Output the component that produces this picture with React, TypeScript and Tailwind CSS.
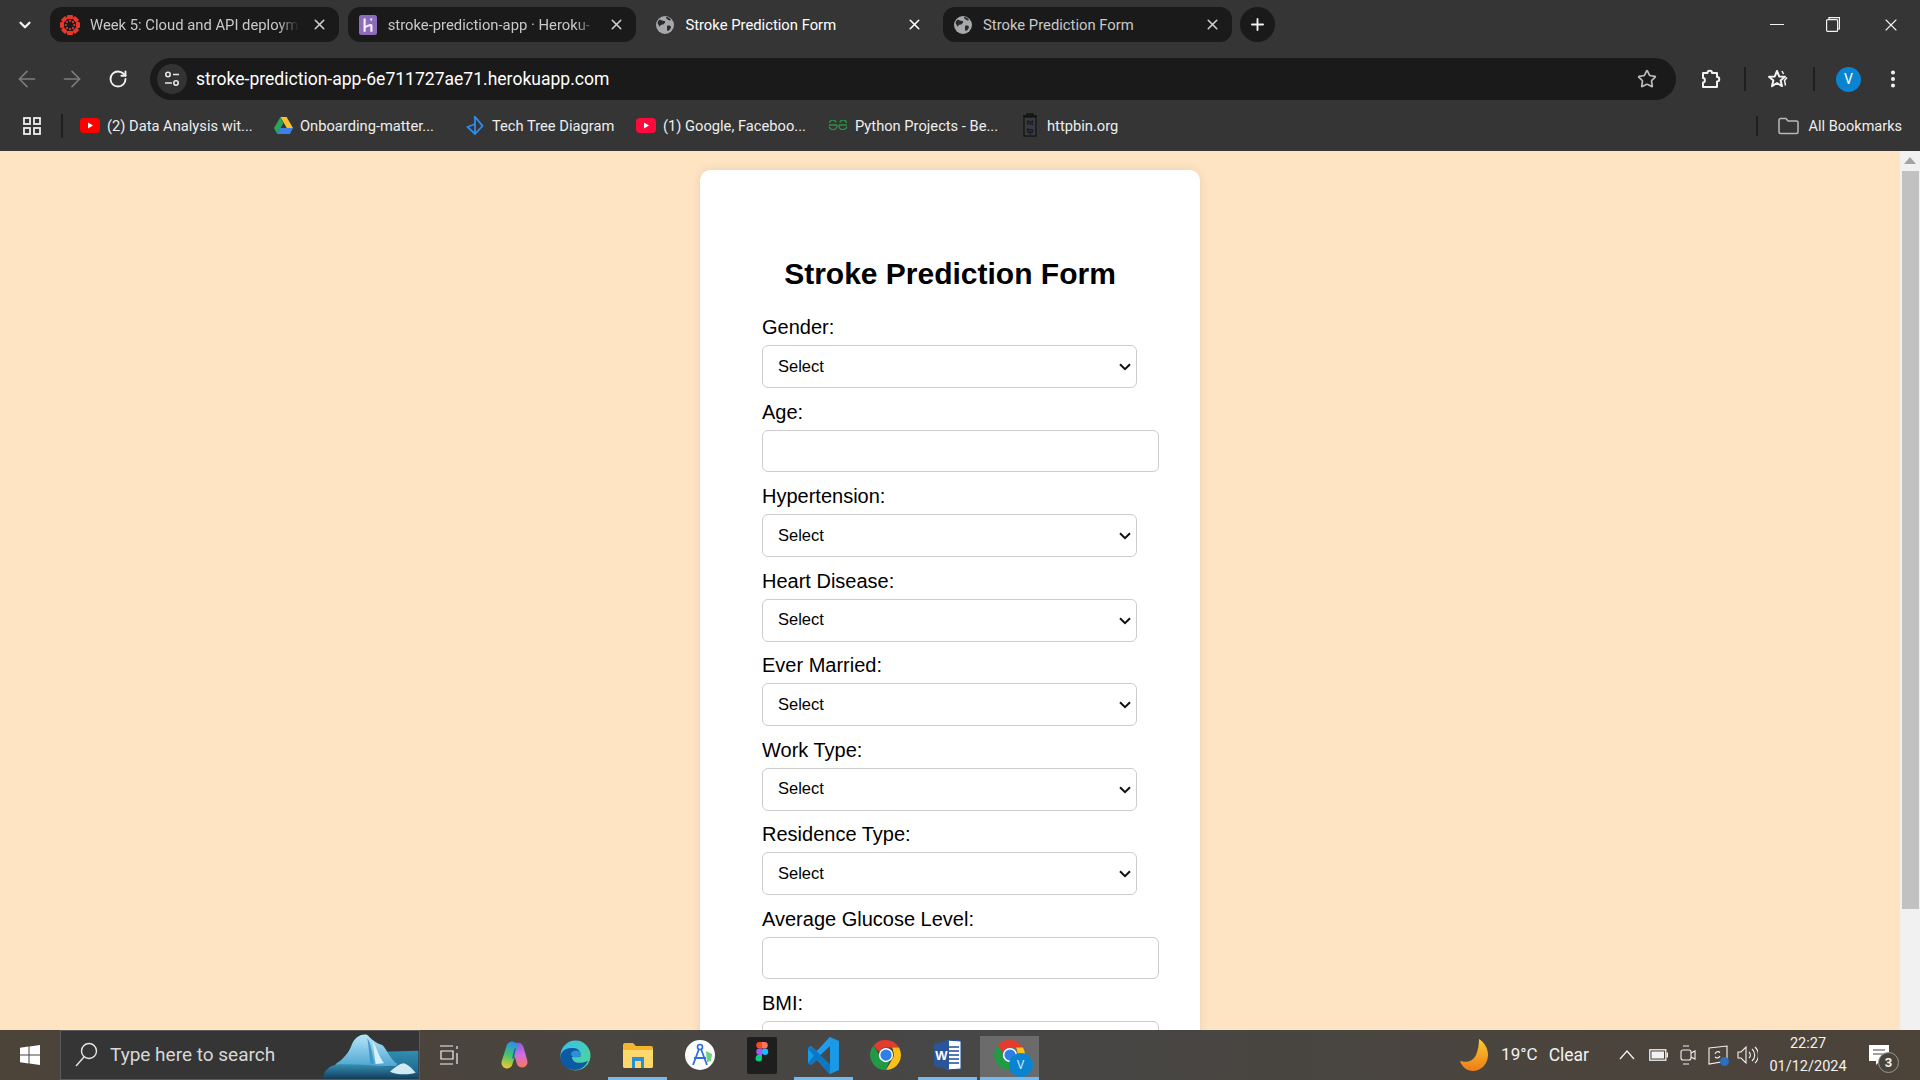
import React from "react";
import { ArrowLeft, ArrowRight, ChevronDown, MoreVertical, Plus, RotateCw, Star, X } from "lucide-react";

const ui = "font-['Roboto','Noto_Sans',sans-serif]";

function Globe() {
  return (
    <svg width="20" height="20" viewBox="0 0 20 20" className="shrink-0">
      <circle cx="10" cy="10" r="9" fill="#a6a8ab" />
      <path d="M4 5c2-1 3 1 5 1s1 2 0 3-3 0-4 2-1-1-2-2 0-3 1-4zM12 11c2-1 4 0 4 1s-2 4-3 4-1-2-1-3 0-2 0-2zM11 2c2 0 4 1 5 3-1 1-3 0-4-1s-1-1-1-2z" fill="#2b2b2b" />
    </svg>
  );
}

function Canvas() {
  const dots = Array.from({ length: 8 }, (_, i) => i * 45);
  return (
    <svg width="22" height="22" viewBox="0 0 22 22" className="shrink-0">
      {dots.map((a) => (
        <g key={a} transform={`rotate(${a} 11 11)`}>
          <rect x="8" y="1" width="6" height="4" rx="1" fill="#e8362a" />
          <circle cx="11" cy="6.800" r="1.100" fill="#e8362a" />
        </g>
      ))}
    </svg>
  );
}

function Heroku() {
  return (
    <svg width="18" height="20" viewBox="0 0 18 20" className="shrink-0">
      <rect width="18" height="20" rx="2.500" fill="#8d6cba" />
      <path d="M4.500 3.500h2.200v7.200c2-1.200 4-1.700 5.300-1.700 1 0 1.500.7 1.500 1.800v6h-2.200v-5.500c-1.700.2-3 .8-4.600 1.600v3.900H4.500z" fill="#f4eefa" />
      <path d="M10.800 3.500h2.800l-1.400 3z" fill="#f4eefa" />
    </svg>
  );
}

function Youtube({ color = "#f00" }: { color?: string }) {
  return (
    <svg width="20" height="15" viewBox="0 0 20 15" className="shrink-0">
      <rect width="20" height="15" rx="4" fill={color} />
      <path d="M8 4.500l5 3-5 3z" fill="#fff" />
    </svg>
  );
}

function Drive() {
  return (
    <svg width="19" height="17" viewBox="0 0 19 17" className="shrink-0">
      <path d="M6.400 0h6.200l6.400 11h-6.200z" fill="#fbc02d" />
      <path d="M6.400 0L0 11l3.100 6 6.400-11z" fill="#2aa55a" />
      <path d="M3.100 17h12.800L19 11H6.200z" fill="#3f7fe8" />
    </svg>
  );
}

function TechTree() {
  return (
    <svg width="18" height="21" viewBox="0 0 18 21" className="shrink-0" fill="none" stroke="#2d8cf0" strokeWidth="1.800">
      <path d="M9 9L1.500 12l7.500 7 7.500-8L10 3 8 1.500" />
      <path d="M9 1.500V19" />
    </svg>
  );
}

function Gfg() {
  return (
    <svg width="20" height="10" viewBox="0 0 20 10" className="shrink-0" fill="none" stroke="#2f8d46" strokeWidth="1.400">
      <path d="M1 5h8M1.500 3A3.300 3.300 0 0 1 8 2.500M1.200 6.500A3.500 3.500 0 0 0 9 5M19 5h-8M18.500 3A3.300 3.300 0 0 0 12 2.500M18.800 6.500A3.500 3.500 0 0 1 11 5" />
    </svg>
  );
}

function HttpBin() {
  return (
    <svg width="16" height="24" viewBox="0 0 16 24" className="shrink-0">
      <path d="M1 3h14M5 3V1h6v2" stroke="#111" strokeWidth="1.400" fill="none" />
      <rect x="2" y="4" width="12" height="19" fill="#3a3a3a" stroke="#111" strokeWidth="1.200" />
      <text x="8" y="12" textAnchor="middle" fontSize="7" fontWeight="700" fill="#111" fontFamily="Liberation Sans">ht</text>
      <text x="8" y="20" textAnchor="middle" fontSize="7" fontWeight="700" fill="#111" fontFamily="Liberation Sans">tp</text>
    </svg>
  );
}

function ChromeLogo({ size = 30 }: { size?: number }) {
  return (
    <svg width={size} height={size} viewBox="0 0 48 48" className="shrink-0">
      <path d="M24 4a20 20 0 0 1 17.300 10H24a10 10 0 0 0-9.200 6L7.600 11.300A20 20 0 0 1 24 4z" fill="#e33b2e" />
      <path d="M41.300 14A20 20 0 0 1 24 44l8.700-15a10 10 0 0 0 .9-10 10 10 0 0 0-1.600-5z" fill="#fbc116" />
      <path d="M7.600 11.300L16 26a10 10 0 0 0 12 7.200L24 44A20 20 0 0 1 7.600 11.300z" fill="#229a45" />
      <circle cx="24" cy="24" r="9.500" fill="#fff" />
      <circle cx="24" cy="24" r="7.500" fill="#2f7fe6" />
    </svg>
  );
}

function Tab({ icon, title, active, fade }: { icon: React.ReactNode; title: string; active?: boolean; fade?: boolean }) {
  return (
    <div className={`flex h-[35px] w-[288.500px] shrink-0 items-center rounded-[12px] pr-[11px] ${active ? "" : "bg-[#1a1a1a]"}`}>
      <div className="flex w-[40px] shrink-0 justify-center">{icon}</div>
      <span
        className={`mt-[2px] min-w-0 flex-1 overflow-hidden whitespace-nowrap text-[14.800px] ${fade ? "[mask-image:linear-gradient(90deg,#000_90%,transparent_100%)]" : ""} ${active ? "text-white" : "text-[#c9c9c9]"}`}
      >
        {title}
      </span>
      <X size={17} strokeWidth={2.200} className={`ml-[12px] shrink-0 ${active ? "text-white" : "text-[#d0d0d0]"}`} />
    </div>
  );
}

function Bookmark({ icon, label, w }: { icon: React.ReactNode; label: string; w: string }) {
  return (
    <div className={`flex shrink-0 items-center ${w}`}>
      <div className="flex w-[34px] shrink-0 justify-center">{icon}</div>
      <span className="mt-[2px] whitespace-nowrap text-[14.700px] text-[#eeeeee]">{label}</span>
    </div>
  );
}

function Field({ label, kind }: { label: string; kind: "select" | "input" }) {
  return (
    <div className="flex flex-col">
      <label className="mb-[5px] h-[26px] text-[20px] leading-[26px] text-black">{label}</label>
      {kind === "select" ? (
        <div className="relative h-[43px] w-[375px]">
          <select className="h-full w-full appearance-none rounded-[6px] border border-[#cccccc] bg-white pb-[1px] pl-[15px] text-[16.500px] text-black">
            <option>Select</option>
          </select>
          <svg width="12" height="8" viewBox="0 0 12 8" fill="none" stroke="#111111" strokeWidth="2" className="pointer-events-none absolute right-[6px] top-[18px]">
            <path d="M1 1.200l5 5 5-5" />
          </svg>
        </div>
      ) : (
        <input className="h-[42px] w-[397px] rounded-[6px] border border-[#cccccc] bg-white" />
      )}
    </div>
  );
}

function Toolbar() {
  return (
    <div className="flex h-[42px] items-center">
      <div className="flex w-[150px] shrink-0 items-center">
        <div className="flex w-[54px] justify-center"><ArrowLeft size={26} strokeWidth={1.500} className="text-[#7d7d7d]" /></div>
        <div className="flex w-[36px] justify-center"><ArrowRight size={26} strokeWidth={1.500} className="text-[#7d7d7d]" /></div>
        <div className="ml-[14px] flex w-[28px] justify-center"><RotateCw size={20} strokeWidth={2.300} className="text-[#f0f0f0]" /></div>
      </div>
      <div className="flex h-[42px] w-[1526px] shrink-0 items-center rounded-full bg-[#1a1a1a] pl-[7px] pr-[19px]">
        <div className="flex h-[30px] w-[30px] shrink-0 items-center justify-center rounded-full bg-[#333333]">
          <svg width="18" height="18" viewBox="0 0 18 18" fill="none" stroke="#e8e8e8" strokeWidth="1.600">
            <circle cx="5" cy="4.500" r="2.200" />
            <path d="M10 4.500h6M2 13h7" />
            <circle cx="13" cy="13" r="2.200" />
          </svg>
        </div>
        <span className="ml-[9px] mt-[1px] flex-1 whitespace-nowrap text-[17.550px] text-white">stroke-prediction-app-6e711727ae71.herokuapp.com</span>
        <Star size={20} strokeWidth={2} className="text-[#bdbdbd]" />
      </div>
      <div className="flex flex-1 items-center">
        <div className="ml-[22px] flex w-[26px] justify-center">
          <svg width="22" height="22" viewBox="0 0 22 22" fill="none" stroke="#f2f2f2" strokeWidth="2" strokeLinejoin="round">
            <path d="M3 5h4.500c0-3 4.500-3 4.500 0H17v4c3 0 3 4.500 0 4.500V19H3v-4.500c2.500 0 2.500-4.500 0-4.500z" />
          </svg>
        </div>
        <div className="ml-[20px] h-[24px] w-[2px] bg-[#1f1f1f]" />
        <div className="ml-[20px] flex w-[26px] justify-center">
          <svg width="24" height="24" viewBox="0 0 24 24" fill="none" stroke="#f2f2f2" strokeWidth="2" strokeLinejoin="round">
            <path d="M10 4l2.200 5.400 5.800.4-4.400 3.700 1.400 5.600L10 16l-5 3.100 1.400-5.600L2 9.800l5.800-.4z" />
            <path d="M15 4l1.500 3M20 10.500l-2.500 3 1 5" strokeWidth="1.500" />
          </svg>
        </div>
        <div className="ml-[21px] h-[24px] w-[2px] bg-[#1f1f1f]" />
        <div className="ml-[21px] flex h-[25px] w-[25px] items-center justify-center rounded-full bg-[#0a84d0] text-[14px] text-white">V</div>
        <MoreVertical size={22} strokeWidth={2.400} className="ml-[21px] text-[#f2f2f2]" />
      </div>
    </div>
  );
}

function TaskSlot({ children, on, active }: { children: React.ReactNode; on?: boolean; active?: boolean }) {
  return (
    <div className="relative flex h-[50px] w-[62px] shrink-0 items-end justify-center">
      <div className={`relative flex h-[44px] w-[59px] items-center justify-center ${active ? "bg-[#6b6b6b]" : ""}`}>
        <div className="mt-[-6px]">{children}</div>
        {on && <div className="absolute bottom-0 left-0 h-[3px] w-full bg-[#76b9ed]" />}
      </div>
    </div>
  );
}

export default function App() {
  return (
    <div className={`flex h-screen w-full flex-col overflow-hidden ${ui}`}>
      <header className="h-[151px] shrink-0 bg-[#353535]">
        <div className="flex h-[58px] items-start pt-[7px]">
          <div className="flex h-[35px] w-[50px] shrink-0 items-center justify-center">
            <ChevronDown size={18} strokeWidth={3} className="text-[#f2f2f2]" />
          </div>
          <div className="flex gap-[9.200px]">
            <Tab icon={<Canvas />} title="Week 5: Cloud and API deploym" fade />
            <Tab icon={<Heroku />} title="stroke-prediction-app · Heroku-" fade />
            <Tab icon={<Globe />} title="Stroke Prediction Form" active />
            <Tab icon={<Globe />} title="Stroke Prediction Form" />
          </div>
          <div className="ml-[8px] flex h-[35px] w-[35px] shrink-0 items-center justify-center rounded-full bg-[#1a1a1a]">
            <Plus size={19} strokeWidth={2.400} className="text-[#f2f2f2]" />
          </div>
          <div className="ml-auto flex h-[35px] items-center pr-[19px]">
            <div className="h-[1.500px] w-[14px] bg-[#f2f2f2]" />
            <svg width="14" height="15" viewBox="0 0 14 15" fill="none" stroke="#f2f2f2" strokeWidth="1.200" className="ml-[42px]">
              <rect x="0.600" y="2.600" width="11" height="11.800" rx="1" />
              <path d="M3 2.500V.6h10.400V12H12" />
            </svg>
            <X size={20} strokeWidth={1.300} className="ml-[41px] text-[#f2f2f2]" />
          </div>
        </div>
        <Toolbar />
        <div className="flex h-[51px] items-center">
          <div className="flex w-[61px] shrink-0 items-center">
            <svg width="18" height="18" viewBox="0 0 18 18" fill="none" stroke="#eeeeee" strokeWidth="1.800" className="ml-[23px]">
              <rect x="1" y="1" width="6" height="6" />
              <rect x="11" y="1" width="6" height="6" />
              <rect x="1" y="11" width="6" height="6" />
              <rect x="11" y="11" width="6" height="6" />
            </svg>
          </div>
          <div className="h-[24px] w-[2px] shrink-0 bg-[#1f1f1f]" />
          <div className="ml-[10px] flex items-center">
            <Bookmark icon={<Youtube />} label="(2) Data Analysis wit..." w="w-[193px]" />
            <Bookmark icon={<Drive />} label="Onboarding-matter..." w="w-[192px]" />
            <Bookmark icon={<TechTree />} label="Tech Tree Diagram" w="w-[171px]" />
            <Bookmark icon={<Youtube color="#ff0a3c" />} label="(1) Google, Faceboo..." w="w-[192px]" />
            <Bookmark icon={<Gfg />} label="Python Projects - Be..." w="w-[192px]" />
            <Bookmark icon={<HttpBin />} label="httpbin.org" w="w-[100px]" />
          </div>
          <div className="ml-auto flex items-center pr-[18px]">
            <div className="h-[20px] w-[2px] bg-[#1f1f1f]" />
            <svg width="21" height="18" viewBox="0 0 21 18" fill="none" stroke="#b9b9b9" strokeWidth="1.500" className="ml-[20px]">
              <path d="M1 3a1.500 1.500 0 0 1 1.500-1.500H8l2 2.500h8.500A1.500 1.500 0 0 1 20 5.500V15a1.500 1.500 0 0 1-1.500 1.500h-16A1.500 1.500 0 0 1 1 15z" />
            </svg>
            <span className="ml-[10px] mt-[2px] whitespace-nowrap text-[14.500px] text-[#eeeeee]">All Bookmarks</span>
          </div>
        </div>
      </header>

      <main className="flex min-h-0 flex-1 bg-[#ffe4c4]">
        <div className="min-w-0 flex-1 overflow-hidden">
          <form className="mx-auto mt-[19px] w-[500px] rounded-[10px] bg-white pb-[40px] pl-[62px] pt-[81px] font-['Liberation_Sans',Arial,sans-serif] shadow-[0_0_10px_rgba(0,0,0,0.1)]">
            <h2 className="mb-[17px] ml-[-62px] h-[46px] text-center text-[30px] font-bold leading-[46px] text-black">Stroke Prediction Form</h2>
            <div className="grid auto-rows-[84.500px]">
              <Field label="Gender:" kind="select" />
              <Field label="Age:" kind="input" />
              <Field label="Hypertension:" kind="select" />
              <Field label="Heart Disease:" kind="select" />
              <Field label="Ever Married:" kind="select" />
              <Field label="Work Type:" kind="select" />
              <Field label="Residence Type:" kind="select" />
              <Field label="Average Glucose Level:" kind="input" />
              <Field label="BMI:" kind="input" />
            </div>
          </form>
        </div>
        <div className="flex w-[20px] shrink-0 flex-col items-center bg-[#f1f1f1]">
          <div className="mt-[6px] h-0 w-0 border-x-[6px] border-b-[7px] border-x-transparent border-b-[#a3a3a3]" />
          <div className="mt-[7px] h-[738px] w-[17px] bg-[#c1c1c1]" />
        </div>
      </main>

      <footer className="flex h-[50px] shrink-0 items-center bg-[linear-gradient(90deg,#4c4339_0%,#4a443d_22%,#474747_50%,#494540_70%,#4c4339_100%)]">
        <div className="flex w-[60px] shrink-0 justify-center">
          <svg width="22" height="22" viewBox="0 0 22 22" fill="#ffffff">
            <path d="M1 3.800l8.500-1.200v8H1zM10.500 2.400L21 1v9.600H10.500zM1 11.500h8.500v8L1 18.300zM10.500 11.500H21V21l-10.500-1.500z" />
          </svg>
        </div>
        <div className="relative flex h-[50px] w-[360px] shrink-0 items-center overflow-hidden border border-[#5a5a5a] bg-[#353535]">
          <svg width="24" height="26" viewBox="0 0 24 26" fill="none" stroke="#e8e8e8" strokeWidth="1.400" className="ml-[13px]">
            <circle cx="15" cy="9" r="7.500" />
            <path d="M10 15L2 24" />
          </svg>
          <span className="ml-[12px] whitespace-nowrap text-[19px] text-[#d8d8d8]">Type here to search</span>
          <svg width="98" height="50" viewBox="6 0 294 150" className="absolute bottom-[-1px] right-0">
            <defs>
              <linearGradient id="ice" x1="0" y1="0" x2="0" y2="1"><stop offset="0" stopColor="#b5e6f8" /><stop offset="1" stopColor="#4fa6d2" /></linearGradient>
              <linearGradient id="backw" x1="0" y1="0" x2="0" y2="1"><stop offset="0" stopColor="#2f8fb2" /><stop offset="1" stopColor="#1c5a80" /></linearGradient>
              <linearGradient id="frontw" x1="0" y1="0" x2="0" y2="1"><stop offset="0" stopColor="#3590b2" /><stop offset="1" stopColor="#0f3655" /></linearGradient>
            </defs>
            <path d="M190 65L298 62V150H190z" fill="url(#backw)" />
            <path d="M50 102C70 90 90 70 100 40 110 20 130 10 145 15 155 25 170 40 190 45 205 60 215 90 235 102L230 108H50z" fill="url(#ice)" />
            <path d="M145 25C150 50 150 80 155 105L165 100C160 70 155 40 145 25z" fill="#3f97c9" />
            <path d="M160 32C172 50 178 75 195 100L170 102C166 78 164 52 160 32z" fill="#d3f0fb" />
            <path d="M10 150C12 125 30 105 60 103 110 103 200 105 298 125V150z" fill="url(#frontw)" />
            <path d="M213 125C230 110 245 100 255 100 270 105 280 118 290 128 265 135 235 135 213 125z" fill="#cfeaf5" />
          </svg>
        </div>
        <div className="flex w-[59px] shrink-0 justify-center">
          <svg width="20" height="20" viewBox="0 0 20 20" fill="none" stroke="#f2f2f2" strokeWidth="1.200">
            <path d="M0 1h13M0 19h13M1 6h12v8H1z" />
            <path d="M17 1v3M17 8v11" />
          </svg>
        </div>
        <div className="ml-[3.500px] flex">
          <TaskSlot>
            <svg width="30" height="30" viewBox="0 0 30 30" fill="none" strokeLinecap="round">
              <defs>
                <linearGradient id="cp1" gradientUnits="userSpaceOnUse" x1="12" y1="2" x2="6" y2="28"><stop offset="0" stopColor="#2d8fe8" /><stop offset="0.500" stopColor="#43c46b" /><stop offset="1" stopColor="#f7c72f" /></linearGradient>
                <linearGradient id="cp2" gradientUnits="userSpaceOnUse" x1="18" y1="2" x2="22" y2="28"><stop offset="0" stopColor="#7a5ce6" /><stop offset="0.500" stopColor="#d86be0" /><stop offset="1" stopColor="#f6785a" /></linearGradient>
              </defs>
              <path d="M19 8l4 14" stroke="url(#cp2)" strokeWidth="11" />
              <path d="M13 7L8 23" stroke="url(#cp1)" strokeWidth="11" />
              <path d="M16 9l-2 9" stroke="#2f56c8" strokeWidth="1.500" />
            </svg>
          </TaskSlot>
          <TaskSlot>
            <svg width="31" height="31" viewBox="0 0 31 31">
              <defs><linearGradient id="ed" x1="0" y1="0" x2="1" y2="1"><stop offset="0" stopColor="#35c1f1" /><stop offset="1" stopColor="#53d68a" /></linearGradient></defs>
              <circle cx="15.500" cy="15.500" r="15" fill="url(#ed)" />
              <path d="M.5 17C1 9 8 8 13 8c6 0 9 5 7 9H12c0 5 6 8 16 4-3 6-8 9-13 9C7 30 0 25 .5 17z" fill="#0c59a4" />
              <ellipse cx="16" cy="14" rx="5" ry="3.500" fill="#2d8fd5" />
            </svg>
          </TaskSlot>
          <TaskSlot on>
            <svg width="30" height="26" viewBox="0 0 30 26">
              <path d="M0 3a2 2 0 0 1 2-2h8l3 3h15a2 2 0 0 1 2 2v18a2 2 0 0 1-2 2H2a2 2 0 0 1-2-2z" fill="#f2b52b" />
              <path d="M0 8h30v16a2 2 0 0 1-2 2H2a2 2 0 0 1-2-2z" fill="#fcd96a" />
              <path d="M9 15h12v11h-3v-7h-6v7H9z" fill="#2a8fd8" />
            </svg>
          </TaskSlot>
          <TaskSlot>
            <svg width="30" height="36" viewBox="0 0 30 36" fill="none">
              <circle cx="15" cy="18" r="15" fill="#ffffff" />
              <circle cx="15" cy="10" r="2.500" stroke="#2f6fdc" strokeWidth="1.600" />
              <path d="M14 12L8 28M16 12l6 16M9 21h12" stroke="#2f6fdc" strokeWidth="1.800" />
              <path d="M21 14l6 3-1 7-4 1z" fill="#6cd07c" />
            </svg>
          </TaskSlot>
          <TaskSlot>
            <div className="flex h-[37px] w-[30px] items-center justify-center rounded-[2px] bg-[#1e1e1e]">
              <svg width="14" height="27" viewBox="0 0 14 27">
                <path d="M4.500 0h2.500v6.500H4.500a3.250 3.250 0 0 1 0-6.500z" fill="#f24e1e" />
                <path d="M7 0h2.500a3.250 3.250 0 0 1 0 6.500H7z" fill="#ff7262" />
                <path d="M4.500 6.500H7V13H4.500a3.250 3.250 0 0 1 0-6.500z" fill="#a259ff" />
                <circle cx="10" cy="9.750" r="3.250" fill="#1abcfe" />
                <path d="M4.500 13H7v3.250a3.250 3.250 0 1 1-2.500-3.250z" fill="#0acf83" />
              </svg>
            </div>
          </TaskSlot>
          <TaskSlot on>
            <svg width="31" height="37" viewBox="0 0 31 37">
              <path d="M22 0l9 4v29l-9 4L9 23l-6 5-3-2v-15l3-2 6 5z" fill="#1a9ae6" />
              <path d="M22 0v37L9 23V14z" fill="#1f9cf0" />
              <path d="M22 9L12 18.500 22 28z" fill="#484848" />
              <path d="M0 12l3-3 19 18v10L9 23 3 28l-3-2 6-7.500z" fill="#0a78c2" />
            </svg>
          </TaskSlot>
          <TaskSlot><ChromeLogo size={36} /></TaskSlot>
          <TaskSlot on>
            <svg width="28" height="32" viewBox="0 0 28 32">
              <path d="M13 1l14 1v28l-14 1z" fill="#ffffff" stroke="#1f4e95" />
              <path d="M15 8h10M15 12h10M15 16h10M15 20h10M15 24h10" stroke="#1f4e95" strokeWidth="1.600" />
              <path d="M0 5l15-4v30L0 27z" fill="#2a5699" />
              <text x="7.500" y="21" textAnchor="middle" fontSize="13" fontWeight="700" fill="#ffffff" fontFamily="Liberation Sans">W</text>
            </svg>
          </TaskSlot>
          <TaskSlot on active>
            <div className="relative">
              <ChromeLogo size={36} />
              <div className="absolute bottom-[-4px] right-[-5px] flex h-[24px] w-[24px] items-center justify-center rounded-full bg-[#0a84d0] text-[12px] text-[#cfe8f8]">V</div>
            </div>
          </TaskSlot>
        </div>
        <div className="ml-auto flex items-center pr-[30px] text-[#f2f2f2]">
          <svg width="30" height="34" viewBox="0 0 30 34">
            <defs><linearGradient id="moon" x1="0" y1="0" x2="0" y2="1"><stop offset="0" stopColor="#f8cb2e" /><stop offset="1" stopColor="#ee7b1a" /></linearGradient></defs>
            <path d="M20 1c6 4 9 10 9 16 0 9-7 16-15 16C8 33 3 29 1 23c8 2 13 0 16-6 2-5 3-10 3-16z" fill="url(#moon)" />
          </svg>
          <span className="ml-[12px] whitespace-nowrap text-[17px]">19°C</span>
          <span className="ml-[11px] whitespace-nowrap text-[17.500px]">Clear</span>
          <svg width="16" height="10" viewBox="0 0 16 10" fill="none" stroke="#f2f2f2" strokeWidth="1.300" className="ml-[30px]"><path d="M1 9l7-8 7 8" /></svg>
          <svg width="19" height="12" viewBox="0 0 19 12" className="ml-[14px]">
            <rect x="0.800" y="0.800" width="16" height="10.400" fill="none" stroke="#f2f2f2" strokeWidth="1.300" />
            <rect x="2.500" y="2.500" width="12.500" height="7" fill="#f2f2f2" />
            <rect x="17.500" y="3.500" width="1.500" height="5" fill="#f2f2f2" />
          </svg>
          <svg width="16" height="20" viewBox="0 0 16 20" fill="none" stroke="#f2f2f2" strokeWidth="1.100" className="ml-[12px]">
            <path d="M3 1h6M3 19h6" /><rect x="1" y="5" width="10" height="10" rx="2" /><path d="M11 8l4-2v8l-4-2" />
          </svg>
          <div className="relative ml-[12px]">
            <svg width="20" height="20" viewBox="0 0 20 20" fill="none" stroke="#f2f2f2" strokeWidth="1.100">
              <path d="M1 3l18-2v15l-18 3z" /><path d="M7 9a3 3 0 0 1 5-1.500M12 11a3 3 0 0 1-5 1" />
            </svg>
            <div className="absolute bottom-[-1px] right-[-1px] h-[9px] w-[9px] rounded-full bg-[#2a6fc0]" />
          </div>
          <svg width="21" height="20" viewBox="0 0 21 20" fill="none" stroke="#f2f2f2" strokeWidth="1.100" className="ml-[9px]">
            <path d="M1 7h3l5-5v16l-5-5H1z" /><path d="M12 7a4 4 0 0 1 0 6M15 4a8 8 0 0 1 0 12M18 2a11 11 0 0 1 0 16" />
          </svg>
          <div className="ml-[12px] flex w-[76px] flex-col items-center text-[14.500px] leading-[23px]">
            <span>22:27</span>
            <span>01/12/2024</span>
          </div>
          <div className="relative ml-[22px]">
            <svg width="22" height="22" viewBox="0 0 22 22"><path d="M1 1h20v16h-9l-4 4v-4H1z" fill="#ffffff" /><path d="M5 6h12M5 10h12" stroke="#4a4339" strokeWidth="1.200" /></svg>
            <div className="absolute bottom-[-7px] right-[-9px] flex h-[21px] w-[21px] items-center justify-center rounded-full border border-[#999] bg-[#4a4339] text-[13px] font-bold">3</div>
          </div>
        </div>
      </footer>
    </div>
  );
}
